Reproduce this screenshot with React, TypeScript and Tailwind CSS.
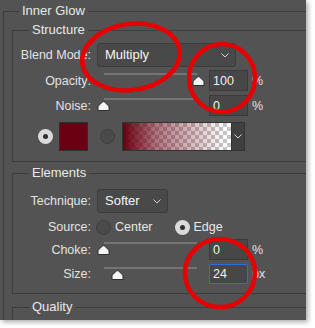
import React from "react";

const Chevron = () => (
  <svg width="8" height="5" viewBox="0 0 8 5">
    <path d="M0.5 0.5 L4 4 L7.5 0.5" fill="none" stroke="#d4d4d4" strokeWidth="1" />
  </svg>
);

function Thumb({ className }: { className: string }) {
  return (
    <svg className={`absolute top-[6px] ${className}`} width="13" height="10" viewBox="0 0 13 10">
      <path
        d="M1 9.5 L1 6 Q1 5 2 4.2 L5.5 1 Q6.5 0.3 7.5 1 L11 4.2 Q12 5 12 6 L12 9.5 Z"
        fill="#f4f4f4"
        stroke="#2e2e2e"
        strokeWidth="1"
      />
    </svg>
  );
}

function Slider({ thumb }: { thumb: string }) {
  return (
    <div className="relative h-full w-[112px] shrink-0">
      <div className="absolute left-[7px] top-[3px] h-[2px] w-[93px] bg-[#747474]" />
      <Thumb className={thumb} />
    </div>
  );
}

function NumBox({ value, active }: { value: string; active?: boolean }) {
  return (
    <div
      className={`flex h-full w-[39px] shrink-0 items-center border pl-[3px] bg-[#474747] text-[#f0f0f0] ${
        active ? "border-[#2a6ee0]" : "border-[#3a3a3a]"
      }`}
    >
      {value}
    </div>
  );
}

function Label({ children }: { children: React.ReactNode }) {
  return <div className="w-[78px] shrink-0 text-right text-[#e2e2e2]">{children}</div>;
}

function Radio({ on }: { on?: boolean }) {
  return on ? (
    <div className="flex h-[15px] w-[15px] shrink-0 items-center justify-center rounded-full bg-[#dadada]">
      <div className="h-[5px] w-[5px] rounded-full bg-[#2f2f2f]" />
    </div>
  ) : (
    <div className="h-[15px] w-[15px] shrink-0 rounded-full border border-[#3e3e3e] bg-[#4a4a4a]" />
  );
}

export default function App() {
  return (
    <div className="relative h-[328px] w-[315px] bg-white font-['Liberation_Sans',Arial,sans-serif] text-[12.5px] leading-[16px]">
      <div className="h-[320px] w-[306px] overflow-hidden bg-[#535353] shadow-[2px_2px_5px_rgba(0,0,0,0.35)]">
        <fieldset className="ml-[3px] mt-[3px] border-l border-t border-[#3d3d3d]">
          <legend className="ml-[15px] px-[3px] text-[13px] leading-[16px] text-[#e8e8e8]">Inner Glow</legend>

          {/* Structure */}
          <fieldset className="ml-[8px] mt-[3px] border-b border-l border-t border-[#3d3d3d] pb-[10px]">
            <legend className="ml-[16px] px-[3px] text-[13px] leading-[16px] text-[#e8e8e8]">Structure</legend>

            <div className="mt-[5px] flex h-[24px] items-center">
              <Label>Blend Mode:</Label>
              <div className="ml-[6px] flex h-full w-[139px] items-center justify-between rounded-[3px] border border-[#3c3c3c] bg-[#494949] pl-[7px] pr-[6px]">
                <span className="text-[13px] text-[#f6f6f6]">Multiply</span>
                <Chevron />
              </div>
            </div>

            <div className="mt-[3px] flex h-[21px] items-center">
              <Label>Opacity:</Label>
              <div className="ml-[6px] flex h-full items-center">
                <Slider thumb="left-[95px]" />
                <NumBox value="100" />
                <span className="ml-[4px] text-[#e2e2e2]">%</span>
              </div>
            </div>

            <div className="mt-[4px] flex h-[21px] items-center">
              <Label>Noise:</Label>
              <div className="ml-[6px] flex h-full items-center">
                <Slider thumb="left-[0px]" />
                <NumBox value="0" />
                <span className="ml-[4px] text-[#e2e2e2]">%</span>
              </div>
            </div>

            <div className="mt-[6px] flex h-[29px] items-center">
              <div className="ml-[25px]">
                <Radio on />
              </div>
              <div className="ml-[6px] h-[29px] w-[29px] border border-[#2e2e2e] bg-[#6a0012]" />
              <div className="ml-[12px]">
                <Radio />
              </div>
              <div className="ml-[7px] flex h-[29px] w-[123px] border border-[#333333]">
                <div className="h-full w-[108px] bg-[linear-gradient(to_right,#6a0012,rgba(106,0,18,0.55)_30%,rgba(106,0,18,0)_95%),repeating-conic-gradient(#c6c6c6_0%_25%,#ffffff_0%_50%)] bg-size-[100%_100%,8px_8px]" />
                <div className="flex h-full flex-1 items-center justify-center border-l border-[#333333] bg-[#404040]">
                  <Chevron />
                </div>
              </div>
            </div>
          </fieldset>

          {/* Elements */}
          <fieldset className="ml-[8px] mt-[3px] border-b border-l border-t border-[#3d3d3d] pb-[9px]">
            <legend className="ml-[16px] px-[3px] text-[13px] leading-[16px] text-[#e8e8e8]">Elements</legend>

            <div className="mt-[8px] flex h-[24px] items-center">
              <Label>Technique:</Label>
              <div className="ml-[6px] flex h-full w-[71px] items-center justify-between rounded-[3px] border border-[#3c3c3c] bg-[#494949] pl-[7px] pr-[6px]">
                <span className="text-[13px] text-[#f6f6f6]">Softer</span>
                <Chevron />
              </div>
            </div>

            <div className="mt-[3px] flex h-[22px] items-center">
              <Label>Source:</Label>
              <div className="ml-[5px]">
                <Radio />
              </div>
              <span className="ml-[4px] text-[#e8e8e8]">Center</span>
              <div className="ml-[22px]">
                <Radio on />
              </div>
              <span className="ml-[4px] text-[#e8e8e8]">Edge</span>
            </div>

            <div className="mt-[1px] flex h-[21px] items-center">
              <Label>Choke:</Label>
              <div className="ml-[6px] flex h-full items-center">
                <Slider thumb="left-[0px]" />
                <NumBox value="0" />
                <span className="ml-[4px] text-[#e2e2e2]">%</span>
              </div>
            </div>

            <div className="mt-[4px] flex h-[20px] items-center">
              <Label>Size:</Label>
              <div className="ml-[6px] flex h-full items-center">
                <Slider thumb="left-[14px]" />
                <NumBox value="24" active />
                <span className="ml-[4px] text-[#e2e2e2]">px</span>
              </div>
            </div>
          </fieldset>

          {/* Quality */}
          <fieldset className="ml-[8px] mt-[5px] h-[40px] border-l border-t border-[#3d3d3d]">
            <legend className="ml-[16px] px-[3px] text-[13px] leading-[16px] text-[#e8e8e8]">Quality</legend>
          </fieldset>
        </fieldset>
      </div>

      <svg className="pointer-events-none absolute inset-0" width="315" height="328" viewBox="0 0 315 328">
        <ellipse cx="131" cy="57" rx="49" ry="33" transform="rotate(-8 131 57)" fill="none" stroke="#e60000" strokeWidth="4.5" />
        <ellipse cx="222" cy="78" rx="33" ry="34" fill="none" stroke="#e60000" strokeWidth="4.5" />
        <ellipse cx="220" cy="273" rx="35" ry="34" fill="none" stroke="#e60000" strokeWidth="4.5" />
      </svg>
    </div>
  );
}
